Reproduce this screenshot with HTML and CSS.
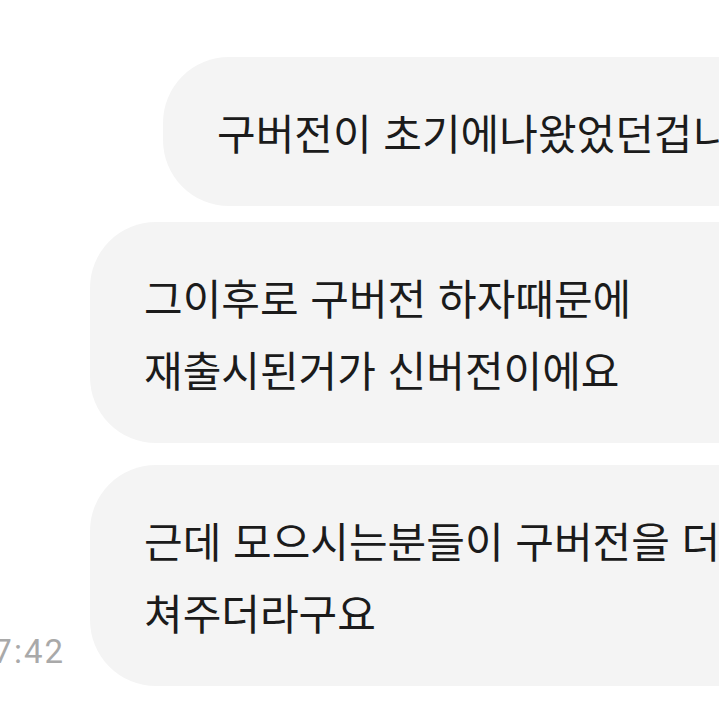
FILE: index.html
```html
<!DOCTYPE html>
<html lang="ko">
<head>
    <meta charset="UTF-8">
    <title>채팅</title>
    <link rel="stylesheet" href="styles.css">
</head>
<body>
    <div class="chat">
        <div class="msg-row first">
            <div class="bubble">구버전이 초기에나왔었던겁니다</div>
        </div>
        <div class="msg-row">
            <div class="bubble wide">그이후로 구버전 하자때문에<br>재출시된거가 신버전이에요</div>
        </div>
        <div class="msg-row last">
            <span class="time">7:42</span>
            <div class="bubble wide">근데 모으시는분들이 구버전을 더<br>쳐주더라구요</div>
        </div>
    </div>
</body>
</html>
```

FILE: styles.css
```css
html, body {
    margin: 0;
    padding: 0;
    background-color: #ffffff;
    overflow: hidden;
}
.chat {
    width: 719px;
    height: 719px;
    overflow: hidden;
    display: flex;
    flex-direction: column;
    gap: 16px;
    padding-top: 57px;
    box-sizing: border-box;
    font-family: "Noto Sans CJK KR", "Noto Sans", sans-serif;
}
.msg-row {
    display: flex;
    align-items: flex-end;
    padding-left: 90px;
}
.msg-row.first {
    padding-left: 163px;
}
.msg-row.last {
    margin-top: 6px;
    padding-left: 0;
}
.bubble {
    flex-shrink: 0;
    background-color: #f4f4f4;
    color: #1b1b1b;
    font-size: 42px;
    line-height: 72px;
    padding: 39px 120px 38px 54px;
    border-radius: 66px;
    white-space: nowrap;
}
.bubble.wide {
    width: 720px;
}
.time {
    flex-shrink: 0;
    width: 90px;
    padding-right: 25px;
    box-sizing: border-box;
    text-align: right;
    font-family: Roboto, "Liberation Sans", sans-serif;
    font-size: 33px;
    letter-spacing: 2px;
    line-height: 1;
    color: #a9a9a9;
    margin-bottom: 18px;
    white-space: nowrap;
    direction: rtl;
}
```
